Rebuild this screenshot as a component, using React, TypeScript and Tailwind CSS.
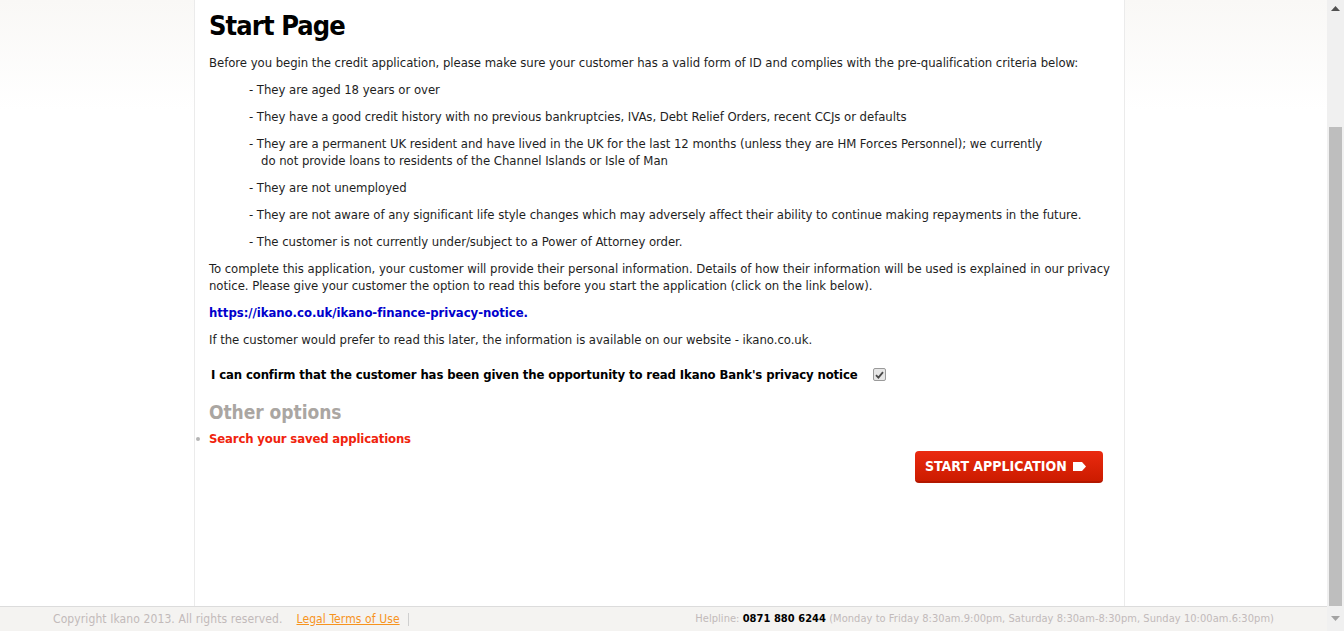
import React from 'react';

const font = { fontFamily: '"DejaVu Sans Condensed", "DejaVu Sans", sans-serif' };

const criteria: React.ReactNode[] = [
  'They are aged 18 years or over',
  'They have a good credit history with no previous bankruptcies, IVAs, Debt Relief Orders, recent CCJs or defaults',
  <>
    They are a permanent UK resident and have lived in the UK for the last 12 months (unless they are HM Forces Personnel); we currently
    <br />
    do not provide loans to residents of the Channel Islands or Isle of Man
  </>,
  'They are not unemployed',
  'They are not aware of any significant life style changes which may adversely affect their ability to continue making repayments in the future.',
  'The customer is not currently under/subject to a Power of Attorney order.',
];

const Scrollbar: React.FC = () => (
  <div className="w-[17px] h-full bg-[#f0f0f0] flex flex-col items-center">
    <div className="h-[17px] flex items-center justify-center">
      <svg width="9" height="5" viewBox="0 0 9 5"><path d="M4.5 0 L9 5 L0 5 Z" fill="#505050" /></svg>
    </div>
    <div className="h-[110px]" />
    <div className="w-[13px] flex-1 bg-[#bebebe]" />
    <div className="h-[25px] flex items-center justify-center">
      <svg width="9" height="5" viewBox="0 0 9 5"><path d="M0 0 L9 0 L4.5 5 Z" fill="#a3a3a3" /></svg>
    </div>
  </div>
);

const App: React.FC = () => {
  return (
    <div className="flex h-[631px] w-[1344px] overflow-hidden bg-white" style={font}>
      <div className="flex flex-col w-[1327px] h-full">
        <div className="flex-1 bg-gradient-to-b from-[#f9f8f6] to-white to-[110px]">
          <div className="ml-[194px] w-[931px] h-full bg-white border-x border-[#ebebeb] px-[14px] text-[13px] leading-[17px] tracking-[-0.04px] text-[#1e1e1e]">
            <h1 className="text-[27px] leading-[34px] font-bold tracking-[-0.9px] text-black pt-[9px] mb-[11px]">Start Page</h1>
            <p className="mb-[10px]">
              Before you begin the credit application, please make sure your customer has a valid form of ID and complies with the pre-qualification criteria below:
            </p>
            <ul className="pl-[40px]">
              {criteria.map((c, i) => (
                <li key={i} className="mb-[10px] pl-[12px] -indent-3">- {c}</li>
              ))}
            </ul>
            <p className="mb-[10px]">
              To complete this application, your customer will provide their personal information. Details of how their information will be used is explained in our privacy notice. Please give your customer the option to read this before you start the application (click on the link below).
            </p>
            <p className="mb-[10px]">
              <a href="#" className="font-bold text-[#0000cc]">https://ikano.co.uk/ikano-finance-privacy-notice.</a>
            </p>
            <p className="mb-[18px]">If the customer would prefer to read this later, the information is available on our website - ikano.co.uk.</p>
            <div className="flex items-center pl-[2px] font-bold tracking-[-0.12px] text-black mb-[17px]">
              <span>I can confirm that the customer has been given the opportunity to read Ikano Bank's privacy notice</span>
              <span className="ml-[15px] w-[13px] h-[13px] rounded-[2px] border border-[#9a9a9a] bg-[#e6e6e6] flex items-center justify-center">
                <svg width="9" height="8" viewBox="0 0 9 8"><path d="M1 4.2 L3.4 6.6 L8 1.2" stroke="#4a4a4a" strokeWidth="1.8" fill="none" /></svg>
              </span>
            </div>
            <h2 className="text-[19px] leading-[24px] font-bold text-[#aaa6a2] mb-[6px]">Other options</h2>
            <div className="relative">
              <span className="absolute left-[-13px] top-[7px] w-[4px] h-[4px] rounded-full bg-[#b5b5b5]" />
              <a href="#" className="font-bold tracking-[-0.15px] text-[#f0230d]">Search your saved applications</a>
            </div>
            <div className="flex justify-end pr-[7px] mt-[4px]">
              <button className="h-[32px] w-[188px] rounded-[4px] bg-gradient-to-b from-[#ea2a10] to-[#cc1b00] border-b-2 border-[#b31700] text-white font-bold text-[14px] tracking-normal flex items-center justify-start pl-[10px] gap-[6px]">
                START APPLICATION
                <svg width="13" height="9" viewBox="0 0 13 9"><path d="M0 0 H9 L13 4.5 L9 9 H0 Z" fill="white" /></svg>
              </button>
            </div>
          </div>
        </div>
        <footer className="h-[25px] border-t border-[#dcdcdc] bg-[#f4f3f1] text-[#c2baba] flex items-center">
          <div className="w-[1221px] mx-auto flex items-center justify-between">
            <div className="flex items-center text-[12px] tracking-[0.1px]">
              <span>Copyright Ikano 2013. All rights reserved.</span>
              <a href="#" className="ml-[14px] text-[#f7931e] underline">Legal Terms of Use</a>
              <span className="ml-[8px] w-px h-[13px] bg-[#cfcfcf]" />
            </div>
            <div className="text-[11px] tracking-[0.05px]">
              Helpline: <span className="font-bold text-black">0871 880 6244</span> (Monday to Friday 8:30am.9:00pm, Saturday 8:30am-8:30pm, Sunday 10:00am.6:30pm)
            </div>
          </div>
        </footer>
      </div>
      <Scrollbar />
    </div>
  );
};

export default App;
